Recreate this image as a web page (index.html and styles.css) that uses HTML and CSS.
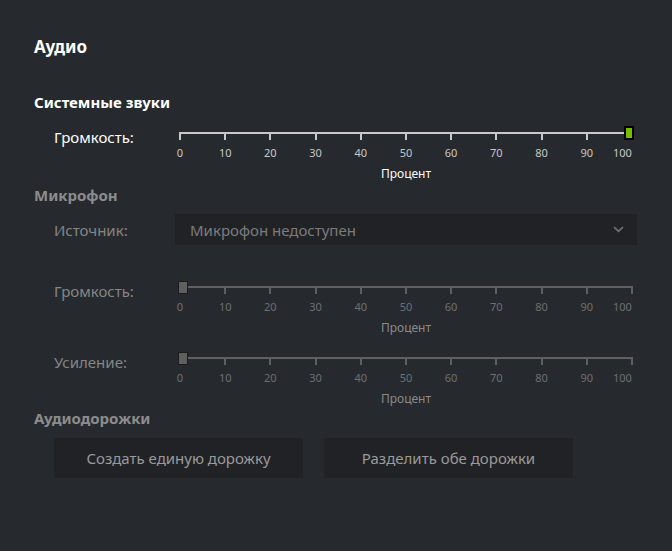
FILE: index.html
```html
<!DOCTYPE html>
<html lang="ru">
<head>
    <meta charset="UTF-8">
    <title>Аудио</title>
    <link rel="stylesheet" href="styles.css">
</head>
<body>
    <div class="page">
        <h1 class="title">Аудио</h1>

        <h2 class="section">Системные звуки</h2>
        <div class="row">
            <span class="label">Громкость:</span>
            <div class="slider">
                <div class="rail">
                    <div class="track"></div>
                    <div class="handle" style="left: 449px"></div>
                </div>
                <div class="ticks">
                    <div class="tick"><i></i><span>0</span></div>
                    <div class="tick"><i></i><span>10</span></div>
                    <div class="tick"><i></i><span>20</span></div>
                    <div class="tick"><i></i><span>30</span></div>
                    <div class="tick"><i></i><span>40</span></div>
                    <div class="tick"><i></i><span>50</span></div>
                    <div class="tick"><i></i><span>60</span></div>
                    <div class="tick"><i></i><span>70</span></div>
                    <div class="tick"><i></i><span>80</span></div>
                    <div class="tick"><i></i><span>90</span></div>
                    <div class="tick"><i></i><span>100</span></div>
                </div>
                <div class="unit">Процент</div>
            </div>
        </div>

        <h2 class="section disabled">Микрофон</h2>
        <div class="row disabled row-select">
            <span class="label">Источник:</span>
            <div class="select">
                <span>Микрофон недоступен</span>
                <svg class="chevron" width="11" height="7" viewBox="0 0 11 7">
                    <path d="M1 1.2l4.5 4 4.5-4" fill="none" stroke="currentColor" stroke-width="1.8"/>
                </svg>
            </div>
        </div>

        <div class="row disabled row-mic">
            <span class="label">Громкость:</span>
            <div class="slider">
                <div class="rail">
                    <div class="track"></div>
                    <div class="handle" style="left: 3px"></div>
                </div>
                <div class="ticks">
                    <div class="tick"><i></i><span>0</span></div>
                    <div class="tick"><i></i><span>10</span></div>
                    <div class="tick"><i></i><span>20</span></div>
                    <div class="tick"><i></i><span>30</span></div>
                    <div class="tick"><i></i><span>40</span></div>
                    <div class="tick"><i></i><span>50</span></div>
                    <div class="tick"><i></i><span>60</span></div>
                    <div class="tick"><i></i><span>70</span></div>
                    <div class="tick"><i></i><span>80</span></div>
                    <div class="tick"><i></i><span>90</span></div>
                    <div class="tick"><i></i><span>100</span></div>
                </div>
                <div class="unit">Процент</div>
            </div>
        </div>

        <div class="row disabled row-gain">
            <span class="label">Усиление:</span>
            <div class="slider">
                <div class="rail">
                    <div class="track"></div>
                    <div class="handle" style="left: 3px"></div>
                </div>
                <div class="ticks">
                    <div class="tick"><i></i><span>0</span></div>
                    <div class="tick"><i></i><span>10</span></div>
                    <div class="tick"><i></i><span>20</span></div>
                    <div class="tick"><i></i><span>30</span></div>
                    <div class="tick"><i></i><span>40</span></div>
                    <div class="tick"><i></i><span>50</span></div>
                    <div class="tick"><i></i><span>60</span></div>
                    <div class="tick"><i></i><span>70</span></div>
                    <div class="tick"><i></i><span>80</span></div>
                    <div class="tick"><i></i><span>90</span></div>
                    <div class="tick"><i></i><span>100</span></div>
                </div>
                <div class="unit">Процент</div>
            </div>
        </div>

        <h2 class="section disabled section-tracks">Аудиодорожки</h2>
        <div class="buttons">
            <button class="btn">Создать единую дорожку</button>
            <button class="btn">Разделить обе дорожки</button>
        </div>
    </div>
</body>
</html>
```

FILE: styles.css
```css
html,
body {
    margin: 0;
}

body {
    background: #262a2e;
    color: #ffffff;
    font-family: "Noto Sans", "Open Sans", sans-serif;
}

.page {
    padding: 36px 0 0 34px;
    width: 638px;
    box-sizing: border-box;
}

.title {
    margin: 0;
    font-size: 17px;
    line-height: 22px;
    font-weight: bold;
}

.section {
    margin: 34px 0 0;
    font-size: 15px;
    line-height: 20px;
    font-weight: bold;
}

.section.disabled {
    margin-top: 4px;
    color: #8c8c8c;
}

.section.section-tracks {
    margin-top: 2px;
}

.row {
    display: flex;
    align-items: flex-start;
    margin: 14px 0 0 20px;
}

.label {
    width: 121px;
    flex-shrink: 0;
    padding-top: 1px;
    font-size: 15px;
    line-height: 20px;
}

.disabled .label {
    color: #858585;
}

/* слайдер */
.slider {
    width: 462px;
}

.rail {
    position: relative;
    height: 8px;
    padding-top: 6px;
    box-sizing: border-box;
}

.track {
    height: 2px;
    margin: 0 5px 0 4px;
    background: #c8c8c8;
}

.handle {
    position: absolute;
    top: 0;
    width: 10px;
    height: 14px;
    box-sizing: border-box;
    background: #78bc00;
    border: 2px solid #000000;
}

.ticks {
    display: flex;
    justify-content: space-between;
    padding: 0 5px;
}

.tick {
    width: 0;
    display: flex;
    flex-direction: column;
    align-items: center;
}

.tick:last-child {
    align-items: flex-end;
}

.tick:last-child i {
    margin-right: -1px;
}

.tick i {
    display: block;
    flex-shrink: 0;
    width: 2px;
    height: 8px;
    margin-top: -2px;
    background: #c8c8c8;
}

.tick span {
    margin-top: 6px;
    font-size: 11px;
    line-height: 14px;
    color: #c8c8c8;
}

.unit {
    margin-top: 7px;
    text-align: center;
    font-size: 12px;
    line-height: 14px;
    color: #ffffff;
}

.disabled .track,
.disabled .tick i {
    background: #5e5f61;
}

.disabled .tick span {
    color: #6e6f71;
}

.disabled .unit {
    color: #8a8a8a;
}

.disabled .handle {
    top: 1px;
    height: 13px;
    background: #5e5f61;
    border: 1px solid #1b1c1e;
}

/* выпадающий список */
.row-select {
    margin-top: 9px;
    align-items: center;
}

.row-select .label {
    padding-top: 0;
}

.select {
    width: 462px;
    height: 31px;
    display: flex;
    align-items: center;
    justify-content: space-between;
    padding: 0 13px 0 15px;
    box-sizing: border-box;
    background: #212226;
    color: #7c7c7c;
    font-size: 15px;
}

.chevron {
    color: #6e6e70;
}

.row-mic {
    margin-top: 35px;
}

.row-gain {
    margin-top: 16px;
}

/* кнопки */
.buttons {
    display: flex;
    gap: 21px;
    margin: 10px 0 0 20px;
}

.btn {
    width: 249px;
    height: 40px;
    border: none;
    background: #212226;
    color: #9a9a9a;
    font-family: "Noto Sans", "Open Sans", sans-serif;
    font-size: 15px;
    padding: 0;
}
```
